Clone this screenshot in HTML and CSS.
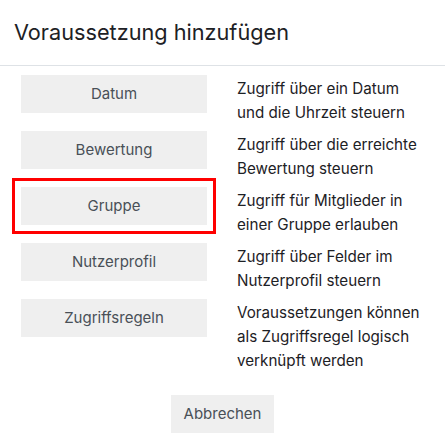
FILE: index.html
```html
<!DOCTYPE html>
<html lang="de">
<head>
<meta charset="utf-8">
<title>Voraussetzung hinzufügen</title>
<link rel="stylesheet" href="styles.css">
</head>
<body>
<div class="dialog">
  <div class="header"><h1 class="title">Voraussetzung hinzufügen</h1></div>
  <div class="body">
    <div class="grid">
      <button class="btn">Datum</button>
      <div class="desc">Zugriff über ein Datum<br>und die Uhrzeit steuern</div>
      <button class="btn">Bewertung</button>
      <div class="desc">Zugriff über die erreichte<br>Bewertung steuern</div>
      <button class="btn focused">Gruppe</button>
      <div class="desc">Zugriff für Mitglieder in<br>einer Gruppe erlauben</div>
      <button class="btn">Nutzerprofil</button>
      <div class="desc">Zugriff über Felder im<br>Nutzerprofil steuern</div>
      <button class="btn">Zugriffsregeln</button>
      <div class="desc">Voraussetzungen können<br>als Zugriffsregel logisch<br>verknüpft werden</div>
    </div>
    <div class="footer"><button class="btn cancel">Abbrechen</button></div>
  </div>
</div>
</body>
</html>
```
FILE: styles.css
```css
html, body { margin: 0; padding: 0; background: #fff; }
body { font-family: Inter, "Noto Sans", sans-serif; color: #1d2125; font-size: 15px; }
.header { padding: 19px 14px 20px; border-bottom: 1px solid #dee2e6; }
.title { margin: 0; font-size: 21.7px; font-weight: 400; line-height: 26px; }
.body { padding: 9px 21px 0; }
.grid { display: grid; grid-template-columns: 186px 1fr; column-gap: 30px; row-gap: 8px; align-items: start; }
.btn { font-family: inherit; font-size: 15px; line-height: 24px; padding: 6px 12px; border: 1px solid #efefef; background: #efefef; color: #495057; border-radius: 0; cursor: pointer; }
.focused { outline: 3px solid #ff0000; outline-offset: 6px; }
.desc { font-size: 15.2px; line-height: 24px; margin: 2px 0 -2px; }
.footer { display: flex; justify-content: center; padding-top: 24px; }
.cancel { padding: 6px 12px; }
```
